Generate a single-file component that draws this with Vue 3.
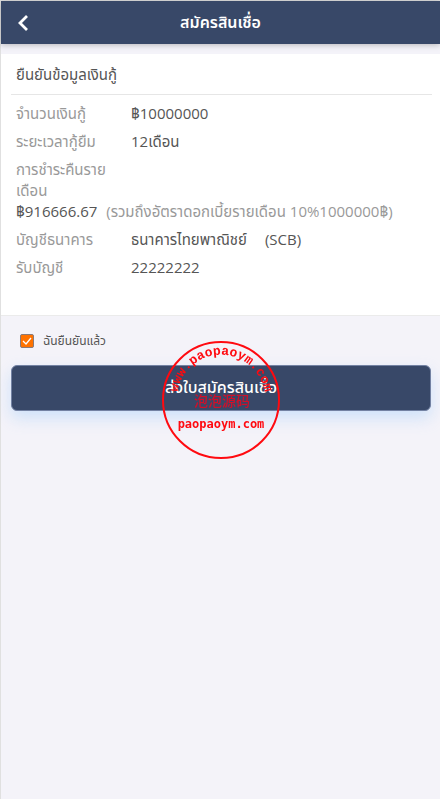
<template>
  <div class="page">
    <header class="navbar">
      <button class="back" type="button" aria-label="ย้อนกลับ">
        <svg width="12" height="18" viewBox="0 0 12 18">
          <path d="M10 2 3 9l7 7" fill="none" stroke="#fff" stroke-width="2.800" />
        </svg>
      </button>
      <h1>สมัครสินเชื่อ</h1>
    </header>

    <main>
      <section class="card">
        <h2>ยืนยันข้อมูลเงินกู้</h2>
        <dl>
          <div v-for="row in rows" :key="row.label" class="row">
            <dt>{{ row.label }}</dt>
            <dd>
              {{ row.value }}
              <span v-if="row.note" class="note">{{ row.note }}</span>
              <span v-if="row.code" class="code">{{ row.code }}</span>
            </dd>
          </div>
        </dl>
      </section>

      <label class="agree">
        <input v-model="agreed" type="checkbox" />
        <span>ฉันยืนยันแล้ว</span>
      </label>

      <button class="submit" type="button">ส่งใบสมัครสินเชื่อ</button>
    </main>

    <!-- 水印印章 -->
    <svg class="stamp" width="120" height="120" viewBox="0 0 120 120">
      <defs>
        <path id="arc" d="M17 68A44 44 0 1 1 103 68" />
      </defs>
      <circle cx="60" cy="60" r="58" fill="none" stroke="#ff0a10" stroke-width="2" />
      <text class="stamp-arc">
        <textPath href="#arc" startOffset="50%" text-anchor="middle">www.paopaoym.com</textPath>
      </text>
      <text class="stamp-name" x="61" y="66" text-anchor="middle">泡泡源码</text>
      <text class="stamp-site" x="60" y="88" text-anchor="middle">paopaoym.com</text>
    </svg>
  </div>
</template>

<script setup>
import { ref } from 'vue'

const agreed = ref(true)

// 借款信息
const rows = [
  { label: 'จำนวนเงินกู้', value: '฿10000000' },
  { label: 'ระยะเวลากู้ยืม', value: '12เดือน' },
  {
    label: 'การชำระคืนรายเดือน',
    value: '฿916666.67',
    note: '(รวมถึงอัตราดอกเบี้ยรายเดือน 10%1000000฿)'
  },
  { label: 'บัญชีธนาคาร', value: 'ธนาคารไทยพาณิชย์', code: '(SCB)' },
  { label: 'รับบัญชี', value: '22222222' }
]
</script>

<style>
body {
  background: #f4f3f9;
}
</style>

<style scoped>
.page {
  box-sizing: border-box;
  min-height: 100vh;
  border-top: 1px solid #e0e0e0;
  border-left: 1px solid #e0e0e0;
  background: #f4f3f9;
  color: #555;
  font-family: "Open Sans", "Noto Sans", "Noto Sans Thai", sans-serif;
  font-size: 15px;
  line-height: 21px;
}

.navbar {
  position: relative;
  display: flex;
  align-items: center;
  justify-content: center;
  height: 43px;
  background: #384868;
  box-shadow: 0 1px 6px rgba(0, 0, 0, 0.25);
  color: #fff;
}

.navbar h1 {
  margin: 0;
  font-size: 16px;
  font-weight: 600;
}

.back {
  position: absolute;
  left: 8px;
  display: flex;
  align-items: center;
  padding: 8px;
  border: 0;
  background: none;
  cursor: pointer;
}

.card {
  margin-top: 10px;
  padding: 0 8px 30px 10px;
  border-bottom: 1px solid #ebebeb;
  background: #fff;
}

.card h2 {
  margin: 0;
  padding: 10px 5px 9px;
  border-bottom: 1px solid #e6e6e6;
  font-size: 15px;
  font-weight: 400;
}

dl {
  margin: 0;
  padding: 8px 5px 0;
}

.row {
  display: flex;
  flex-wrap: wrap;
  margin-bottom: 7px;
}

dt {
  width: 100px;
  margin-right: 15px;
  color: #999;
}

dd {
  margin: 0;
}

.note {
  margin-left: 5px;
  color: #999;
}

.code {
  margin-left: 14px;
}

.agree {
  display: flex;
  align-items: center;
  gap: 9px;
  margin: 14px 19px;
  font-size: 12px;
}

.agree input {
  appearance: none;
  width: 14px;
  height: 14px;
  margin: 0;
  border: 1px solid #8a7a78;
  border-radius: 2px;
  background: #fff;
}

.agree input:checked {
  background: #ff7200 url("data:image/svg+xml,%3Csvg xmlns='http://www.w3.org/2000/svg' viewBox='0 0 12 12'%3E%3Cpath d='M2 6l3 3 5-6' fill='none' stroke='white' stroke-width='1.300'/%3E%3C/svg%3E") center / 12px 12px;
}

.submit {
  display: block;
  width: calc(100% - 19px);
  height: 46px;
  margin: 0 10px;
  padding: 0;
  border: 1px solid #7382a3;
  border-radius: 6px;
  background: #384868;
  box-shadow: 0 7px 16px rgba(160, 205, 250, 0.45);
  color: #fff;
  font-family: inherit;
  font-size: 16px;
  font-weight: 500;
  cursor: pointer;
}

.stamp {
  position: fixed;
  top: 50%;
  left: 50%;
  margin: -60px 0 0 -59px;
  pointer-events: none;
}

.stamp text {
  fill: #ff0a10;
  font-weight: 700;
}

.stamp-arc {
  font-family: "Liberation Mono", monospace;
  font-size: 13px;
}

.stamp .stamp-name {
  fill: #d0102a;
  font-family: "Noto Sans CJK SC", sans-serif;
  font-size: 14px;
  font-weight: 500;
}

.stamp-site {
  font-family: "DejaVu Sans Mono", monospace;
  font-size: 12px;
}
</style>
